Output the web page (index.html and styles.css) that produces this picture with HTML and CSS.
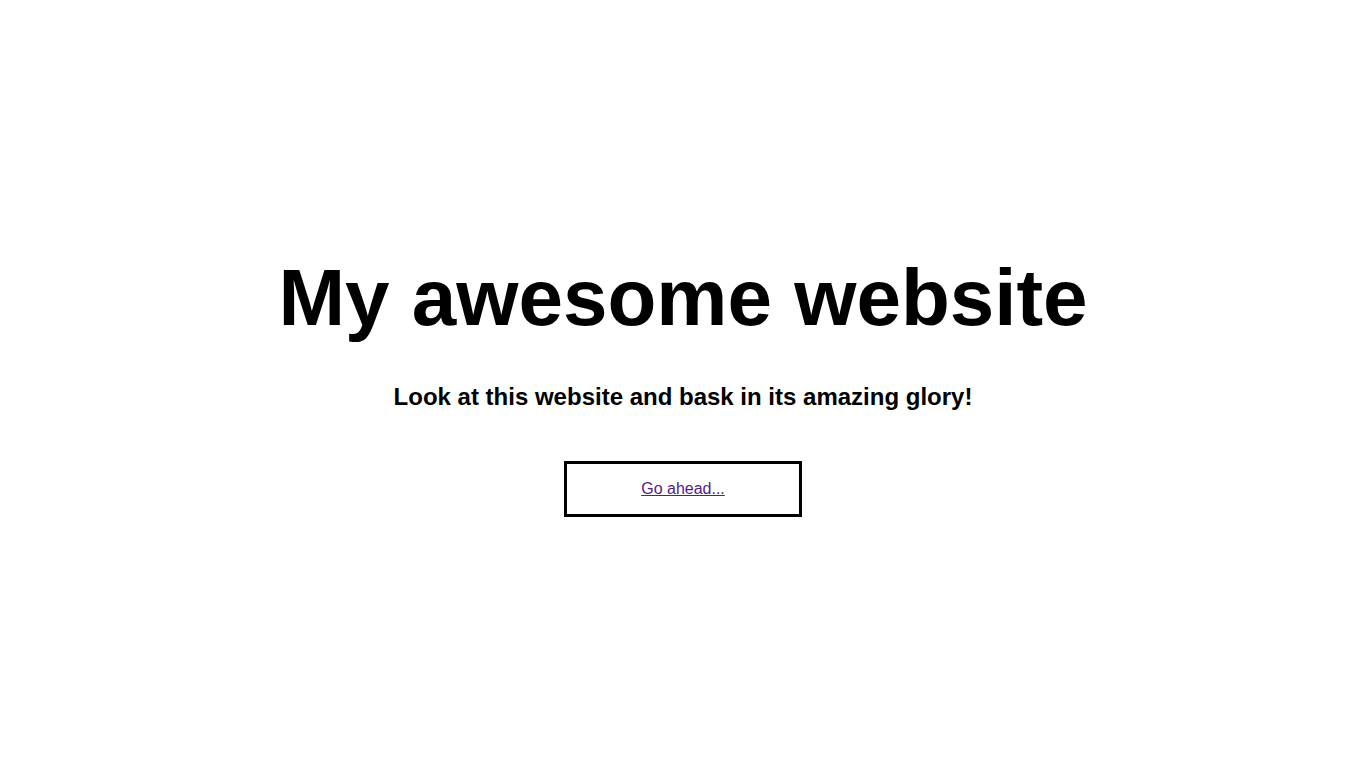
FILE: index.html
```html
<!DOCTYPE html>
<html>
<head>
<meta charset="utf-8">
<link rel="stylesheet" href="styles.css">
</head>
<body>
<main class="hero">
  <h1 class="title">My awesome website</h1>
  <p class="subtitle">Look at this website and bask in its amazing glory!</p>
  <div class="button"><a href="#" class="link">Go ahead...</a></div>
</main>
</body>
</html>
```
FILE: styles.css
```css
html, body {
  margin: 0;
  padding: 0;
  height: 100%;
  background: #fff;
}
body {
  font-family: "Liberation Sans", Arial, Helvetica, sans-serif;
  color: #000;
}
.hero {
  box-sizing: border-box;
  height: 100%;
  padding-top: 6px;
  display: flex;
  flex-direction: column;
  align-items: center;
  justify-content: center;
}
.title {
  font-size: 80px;
  font-weight: bold;
  margin: 0;
  line-height: 1;
}
.subtitle {
  font-size: 24px;
  font-weight: bold;
  margin: 47px 0 0;
  line-height: 1;
}
.button {
  margin-top: 52px;
  width: 232px;
  height: 50px;
  border: 3px solid #000;
  display: flex;
  align-items: center;
  justify-content: center;
}
.link {
  font-size: 16px;
  color: #551a8b;
}
```
